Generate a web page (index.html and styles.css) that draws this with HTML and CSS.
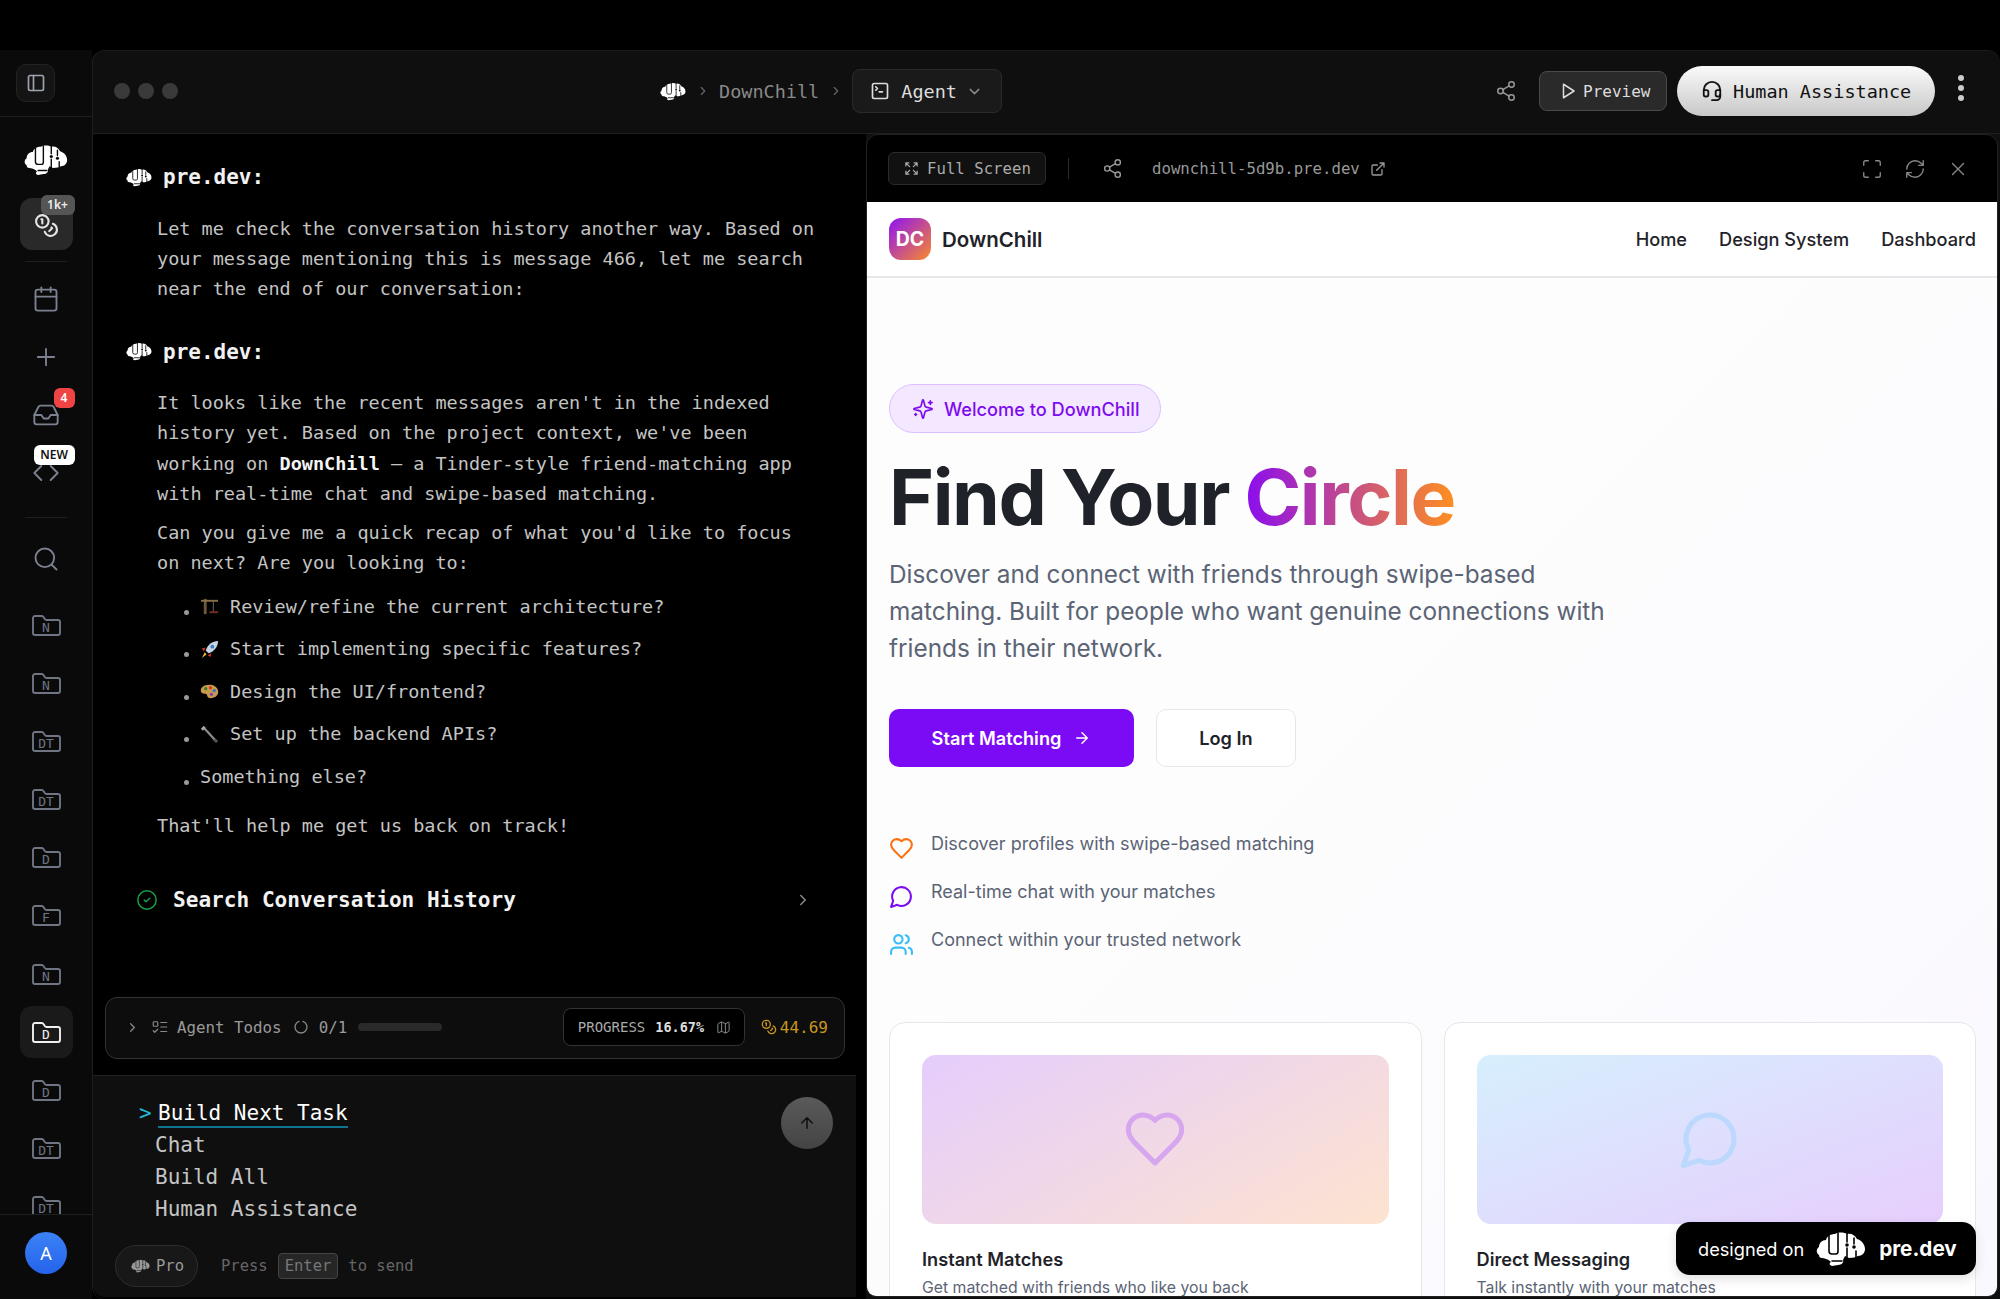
FILE: index.html
```html
<!DOCTYPE html>
<html lang="en">
<head>
    <meta charset="UTF-8">
    <title>DownChill - pre.dev</title>
    <link rel="stylesheet" href="styles.css">
</head>
<body>
    <!-- Icon sprite -->
    <svg class="sprite" xmlns="http://www.w3.org/2000/svg">
        <symbol id="brain" viewBox="0 0 50 36">
            <path class="brain-fill" d="M3 24C0 22 0 18 3 16C3 12 6 9 10 9C11 5 15 3 19 3C22 1 28 1 31 3C35 2 39 4 41 8C45 9 49 13 49 18C49 22 46 25 42 25C40 26 37 27 33 27L29 25L27 29C28 31 26 34 22 34L16 35C13 34 13 32 15 31C12 28 8 27 6 27C4 27 3 26 3 24Z"/>
            <path class="brain-cut" d="M13 4V20Q13 23 16 23H20Q22 23 22 20V2M31 2V11M31 17V28M38 7V13M40 20V26M16 30H26"/>
            <circle class="brain-dot" cx="31" cy="14" r="1.8"/>
            <circle class="brain-dot" cx="38" cy="16" r="1.8"/>
        </symbol>
        <symbol id="i-panel" viewBox="0 0 24 24"><rect x="3" y="3" width="18" height="18" rx="2"/><path d="M9 3v18"/></symbol>
        <symbol id="i-coins" viewBox="0 0 24 24"><circle cx="8" cy="8" r="6"/><path d="M18.09 10.37A6 6 0 1 1 10.34 18M7 6h1v4M16.71 13.88l.7.71-2.82 2.82"/></symbol>
        <symbol id="i-calendar" viewBox="0 0 24 24"><path d="M8 2v4M16 2v4M3 10h18"/><rect x="3" y="4" width="18" height="18" rx="2"/></symbol>
        <symbol id="i-plus" viewBox="0 0 24 24"><path d="M5 12h14M12 5v14"/></symbol>
        <symbol id="i-inbox" viewBox="0 0 24 24"><path d="M22 12h-6l-2 3h-4l-2-3H2"/><path d="M5.45 5.11 2 12v6a2 2 0 0 0 2 2h16a2 2 0 0 0 2-2v-6l-3.45-6.89A2 2 0 0 0 16.76 4H7.24a2 2 0 0 0-1.79 1.11z"/></symbol>
        <symbol id="i-code" viewBox="0 0 24 24"><path d="M16 18l6-6-6-6M8 6l-6 6 6 6"/></symbol>
        <symbol id="i-search" viewBox="0 0 24 24"><circle cx="11" cy="11" r="8"/><path d="m21 21-4.3-4.3"/></symbol>
        <symbol id="i-folder" viewBox="0 0 29 21"><path d="M3 20h23a2 2 0 0 0 2-2V7a2 2 0 0 0-2-2H14.5a2 2 0 0 1-1.7-.9L11.5 2A2 2 0 0 0 9.8 1H3a2 2 0 0 0-2 2v15a2 2 0 0 0 2 2z"/></symbol>
        <symbol id="i-right" viewBox="0 0 24 24"><path d="m9 18 6-6-6-6"/></symbol>
        <symbol id="i-down" viewBox="0 0 24 24"><path d="m6 9 6 6 6-6"/></symbol>
        <symbol id="i-terminal" viewBox="0 0 24 24"><path d="m7 11 2-2-2-2M11 13h4"/><rect x="3" y="3" width="18" height="18" rx="2"/></symbol>
        <symbol id="i-share" viewBox="0 0 24 24"><circle cx="18" cy="5" r="3"/><circle cx="6" cy="12" r="3"/><circle cx="18" cy="19" r="3"/><path d="M8.59 13.51l6.83 3.98M15.41 6.51l-6.82 3.98"/></symbol>
        <symbol id="i-play" viewBox="0 0 24 24"><path d="M6 3l14 9-14 9z"/></symbol>
        <symbol id="i-headset" viewBox="0 0 24 24"><path d="M3 11h3a2 2 0 0 1 2 2v3a2 2 0 0 1-2 2H5a2 2 0 0 1-2-2v-5Zm0 0a9 9 0 1 1 18 0m0 0v5a2 2 0 0 1-2 2h-1a2 2 0 0 1-2-2v-3a2 2 0 0 1 2-2h3Z"/><path d="M21 16v2a4 4 0 0 1-4 4h-5"/></symbol>
        <symbol id="i-expand" viewBox="0 0 24 24"><path d="m21 21-6-6m6 6v-4.8m0 4.8h-4.8M3 16.2V21m0 0h4.8M3 21l6-6M21 7.8V3m0 0h-4.8M21 3l-6 6M3 7.8V3m0 0h4.8M3 3l6 6"/></symbol>
        <symbol id="i-external" viewBox="0 0 24 24"><path d="M15 3h6v6M10 14 21 3M18 13v6a2 2 0 0 1-2 2H5a2 2 0 0 1-2-2V8a2 2 0 0 1 2-2h6"/></symbol>
        <symbol id="i-maximize" viewBox="0 0 24 24"><path d="M8 3H5a2 2 0 0 0-2 2v3M21 8V5a2 2 0 0 0-2-2h-3M3 16v3a2 2 0 0 0 2 2h3M16 21h3a2 2 0 0 0 2-2v-3"/></symbol>
        <symbol id="i-refresh" viewBox="0 0 24 24"><path d="M3 12a9 9 0 0 1 9-9 9.75 9.75 0 0 1 6.74 2.74L21 8M21 3v5h-5M21 12a9 9 0 0 1-9 9 9.75 9.75 0 0 1-6.74-2.74L3 16M8 16H3v5"/></symbol>
        <symbol id="i-close" viewBox="0 0 24 24"><path d="M18 6 6 18M6 6l12 12"/></symbol>
        <symbol id="i-check" viewBox="0 0 24 24"><circle cx="12" cy="12" r="10"/><path d="m9 12 2 2 4-4"/></symbol>
        <symbol id="i-todo" viewBox="0 0 24 24"><rect x="3" y="5" width="6" height="6" rx="1"/><path d="m3 17 2 2 4-4M13 6h8M13 12h8M13 18h8"/></symbol>
        <symbol id="i-spinner" viewBox="0 0 24 24"><path d="M15 3.5a9 9 0 1 1-6 0"/></symbol>
        <symbol id="i-map" viewBox="0 0 24 24"><path d="M14.106 5.553a2 2 0 0 0 1.788 0l3.659-1.83A1 1 0 0 1 21 4.619v12.764a1 1 0 0 1-.553.894l-4.553 2.277a2 2 0 0 1-1.788 0l-4.212-2.106a2 2 0 0 0-1.788 0l-3.659 1.83A1 1 0 0 1 3 19.381V6.618a1 1 0 0 1 .553-.894l4.553-2.277a2 2 0 0 1 1.788 0zM15 5.764v15M9 3.236v15"/></symbol>
        <symbol id="i-up" viewBox="0 0 24 24"><path d="m5 12 7-7 7 7M12 19V5"/></symbol>
        <symbol id="i-arrow" viewBox="0 0 24 24"><path d="M5 12h14M12 5l7 7-7 7"/></symbol>
        <symbol id="i-sparkles" viewBox="0 0 24 24"><path d="M9.937 15.5A2 2 0 0 0 8.5 14.063l-6.135-1.582a.5.5 0 0 1 0-.962L8.5 9.936A2 2 0 0 0 9.937 8.5l1.582-6.135a.5.5 0 0 1 .963 0L14.063 8.5A2 2 0 0 0 15.5 9.937l6.135 1.581a.5.5 0 0 1 0 .964L15.5 14.063a2 2 0 0 0-1.437 1.437l-1.582 6.135a.5.5 0 0 1-.963 0zM20 3v4M22 5h-4M4 17v2M5 18H3"/></symbol>
        <symbol id="i-heart" viewBox="0 0 24 24"><path d="M19 14c1.49-1.46 3-3.21 3-5.5A5.5 5.5 0 0 0 16.5 3c-1.76 0-3 .5-4.5 2-1.5-1.5-2.74-2-4.5-2A5.5 5.5 0 0 0 2 8.5c0 2.3 1.5 4.05 3 5.5l7 7Z"/></symbol>
        <symbol id="i-message" viewBox="0 0 24 24"><path d="M7.9 20A9 9 0 1 0 4 16.1L2 22Z"/></symbol>
        <symbol id="i-users" viewBox="0 0 24 24"><path d="M16 21v-2a4 4 0 0 0-4-4H6a4 4 0 0 0-4 4v2M22 21v-2a4 4 0 0 0-3-3.87M16 3.13a4 4 0 0 1 0 7.75"/><circle cx="9" cy="7" r="4"/></symbol>
        <symbol id="e-crane" viewBox="0 0 20 20"><path d="M4 2h3v16H4z" fill="#6f5a38"/><path d="M1 3h18v2H1z" fill="#8a7147"/><path d="M10 15h9v2h-9z" fill="#7a2e22"/><path d="M14 5v10" stroke="#6b6b6b" fill="none"/></symbol>
        <symbol id="e-rocket" viewBox="0 0 20 20"><path d="M19 1C13 1 8 5 6 11l3 3c6-2 10-7 10-13z" fill="#c9d4e6"/><circle cx="13" cy="7" r="2" fill="#3b82c4"/><path d="M6 8L2 9l2 3zM12 14l-1 4-3-2z" fill="#d8342c"/><path d="M5 13l2 2-5 4z" fill="#f8b81f"/></symbol>
        <symbol id="e-palette" viewBox="0 0 20 20"><path d="M10 3C4 3 0 6 1 10c1 3 5 2 6 3s0 4 4 4c5 0 9-3 8-8-1-4-5-6-9-6z" fill="#c99a4a"/><circle cx="6" cy="7" r="1.7" fill="#2e7d32"/><circle cx="11" cy="6" r="1.7" fill="#d8342c"/><circle cx="15" cy="9" r="1.7" fill="#2f6fd0"/><circle cx="12" cy="13" r="1.7" fill="#7b3fb3"/></symbol>
        <symbol id="e-wrench" viewBox="0 0 20 20"><path d="M3 2l3 3M5 4l12 13" stroke="#8b8b8b" stroke-width="2.4" fill="none"/><path d="M1 4l3-3 2 2-3 3z" fill="#a8a8a8"/><path d="M15 15l3 3" stroke="#555" stroke-width="3" fill="none"/></symbol>
    </svg>

    <div class="app">
        <!-- Left rail -->
        <aside class="sidebar">
            <div class="side-head">
                <button class="toggle"><svg class="icon ic-20"><use href="#i-panel"/></svg></button>
            </div>
            <nav class="side-nav">
                <svg class="logo"><use href="#brain"/></svg>
                <div class="rail-item rail-active">
                    <svg class="icon ic-coins"><use href="#i-coins"/></svg>
                    <span class="rail-badge badge-gray">1k+</span>
                </div>
                <hr class="rail-rule">
                <div class="rail-item"><svg class="icon ic-26"><use href="#i-calendar"/></svg></div>
                <div class="rail-item"><svg class="icon ic-26"><use href="#i-plus"/></svg></div>
                <div class="rail-item">
                    <svg class="icon ic-26"><use href="#i-inbox"/></svg>
                    <span class="rail-badge badge-red">4</span>
                </div>
                <div class="rail-item">
                    <svg class="icon ic-26"><use href="#i-code"/></svg>
                    <span class="rail-badge badge-new">NEW</span>
                </div>
                <hr class="rail-rule rule-low">
                <div class="rail-item"><svg class="icon ic-26"><use href="#i-search"/></svg></div>
                <div class="folders">
                    <div class="rail-item folder"><svg class="icon ic-folder"><use href="#i-folder"/></svg><span>N</span></div>
                    <div class="rail-item folder"><svg class="icon ic-folder"><use href="#i-folder"/></svg><span>N</span></div>
                    <div class="rail-item folder"><svg class="icon ic-folder"><use href="#i-folder"/></svg><span>DT</span></div>
                    <div class="rail-item folder"><svg class="icon ic-folder"><use href="#i-folder"/></svg><span>DT</span></div>
                    <div class="rail-item folder"><svg class="icon ic-folder"><use href="#i-folder"/></svg><span>D</span></div>
                    <div class="rail-item folder"><svg class="icon ic-folder"><use href="#i-folder"/></svg><span>F</span></div>
                    <div class="rail-item folder"><svg class="icon ic-folder"><use href="#i-folder"/></svg><span>N</span></div>
                    <div class="rail-item folder folder-on"><svg class="icon ic-folder"><use href="#i-folder"/></svg><span>D</span></div>
                    <div class="rail-item folder"><svg class="icon ic-folder"><use href="#i-folder"/></svg><span>D</span></div>
                    <div class="rail-item folder"><svg class="icon ic-folder"><use href="#i-folder"/></svg><span>DT</span></div>
                    <div class="rail-item folder"><svg class="icon ic-folder"><use href="#i-folder"/></svg><span>DT</span></div>
                </div>
            </nav>
            <div class="side-foot"><div class="avatar">A</div></div>
        </aside>

        <main class="main">
            <header class="topbar">
                <div class="dots"><span></span><span></span><span></span></div>
                <div class="crumbs">
                    <svg class="crumb-logo"><use href="#brain"/></svg>
                    <svg class="icon crumb-sep"><use href="#i-right"/></svg>
                    <span class="crumb-name">DownChill</span>
                    <svg class="icon crumb-sep"><use href="#i-right"/></svg>
                    <button class="agent-btn">
                        <svg class="icon ic-20"><use href="#i-terminal"/></svg>
                        <span>Agent</span>
                        <svg class="icon agent-caret"><use href="#i-down"/></svg>
                    </button>
                </div>
                <div class="top-actions">
                    <svg class="icon share-top"><use href="#i-share"/></svg>
                    <button class="preview-btn"><svg class="icon ic-18"><use href="#i-play"/></svg>Preview</button>
                    <button class="human-btn"><svg class="icon ic-22"><use href="#i-headset"/></svg>Human Assistance</button>
                    <div class="kebab"><span></span><span></span><span></span></div>
                </div>
            </header>

            <div class="workspace">
                <section class="chat">
                    <div class="messages">
                        <h3 class="who"><svg class="who-logo"><use href="#brain"/></svg>pre.dev:</h3>
                        <div class="msg msg-first">
                            <p>Let me check the conversation history another way. Based on your message mentioning this is message 466, let me search near the end of our conversation:</p>
                        </div>
                        <h3 class="who who-next"><svg class="who-logo"><use href="#brain"/></svg>pre.dev:</h3>
                        <div class="msg">
                            <p>It looks like the recent messages aren't in the indexed history yet. Based on the project context, we've been working on <strong>DownChill</strong> – a Tinder-style friend-matching app with real&#8209;time chat and swipe-based matching.</p>
                            <p class="p-tight">Can you give me a quick recap of what you'd like to focus on next? Are you looking to:</p>
                            <ul class="choices">
                                <li><svg class="emoji"><use href="#e-crane"/></svg>Review/refine the current architecture?</li>
                                <li><svg class="emoji"><use href="#e-rocket"/></svg>Start implementing specific features?</li>
                                <li><svg class="emoji"><use href="#e-palette"/></svg>Design the UI/frontend?</li>
                                <li><svg class="emoji"><use href="#e-wrench"/></svg>Set up the backend APIs?</li>
                                <li>Something else?</li>
                            </ul>
                            <p class="p-end">That'll help me get us back on track!</p>
                        </div>
                        <div class="tool-row">
                            <svg class="icon tool-check"><use href="#i-check"/></svg>
                            <span class="tool-name">Search Conversation History</span>
                            <svg class="icon tool-caret"><use href="#i-right"/></svg>
                        </div>
                    </div>

                    <div class="todos">
                        <svg class="icon todo-caret"><use href="#i-right"/></svg>
                        <svg class="icon todo-list"><use href="#i-todo"/></svg>
                        <span>Agent Todos</span>
                        <svg class="icon todo-spin"><use href="#i-spinner"/></svg>
                        <span>0/1</span>
                        <div class="todo-bar"></div>
                        <div class="progress-box">
                            <span class="progress-label">PROGRESS</span>
                            <strong class="progress-num">16.67%</strong>
                            <svg class="icon todo-map"><use href="#i-map"/></svg>
                        </div>
                        <div class="credits"><svg class="icon credit-icon"><use href="#i-coins"/></svg>44.69</div>
                    </div>

                    <div class="composer">
                        <div class="composer-top">
                            <div class="options">
                                <div class="opt opt-on"><span class="caret">&gt;</span><span class="opt-label">Build Next Task</span></div>
                                <div class="opt">Chat</div>
                                <div class="opt">Build All</div>
                                <div class="opt">Human Assistance</div>
                            </div>
                            <button class="send"><svg class="icon ic-18"><use href="#i-up"/></svg></button>
                        </div>
                        <div class="composer-foot">
                            <div class="pro-pill"><svg class="pro-logo"><use href="#brain"/></svg>Pro</div>
                            <span>Press</span><kbd>Enter</kbd><span>to send</span>
                        </div>
                    </div>
                </section>

                <section class="panel">
                    <div class="panel-bar">
                        <button class="full-btn"><svg class="icon ic-15"><use href="#i-expand"/></svg>Full Screen</button>
                        <span class="bar-rule"></span>
                        <svg class="icon bar-share"><use href="#i-share"/></svg>
                        <span class="url">downchill-5d9b.pre.dev</span>
                        <svg class="icon ic-16 url-ext"><use href="#i-external"/></svg>
                        <div class="bar-tools">
                            <svg class="icon ic-22 thin"><use href="#i-maximize"/></svg>
                            <svg class="icon ic-22 thin"><use href="#i-refresh"/></svg>
                            <svg class="icon ic-22 thin"><use href="#i-close"/></svg>
                        </div>
                    </div>

                    <div class="site">
                        <div class="site-nav">
                            <div class="brand"><span class="brand-mark">DC</span><span class="brand-name">DownChill</span></div>
                            <div class="nav-links"><a>Home</a><a>Design System</a><a>Dashboard</a></div>
                        </div>
                        <div class="hero">
                            <div class="pill"><svg class="icon pill-icon"><use href="#i-sparkles"/></svg>Welcome to DownChill</div>
                            <h1>Find Your <span class="grad">Circle</span></h1>
                            <p class="lead">Discover and connect with friends through swipe-based matching. Built for people who want genuine connections with friends in their network.</p>
                            <div class="cta">
                                <button class="btn-main">Start Matching<svg class="icon ic-18"><use href="#i-arrow"/></svg></button>
                                <button class="btn-ghost">Log In</button>
                            </div>
                            <ul class="features">
                                <li><svg class="icon feat-icon c-orange"><use href="#i-heart"/></svg>Discover profiles with swipe-based matching</li>
                                <li><svg class="icon feat-icon c-purple"><use href="#i-message"/></svg>Real-time chat with your matches</li>
                                <li><svg class="icon feat-icon c-sky"><use href="#i-users"/></svg>Connect within your trusted network</li>
                            </ul>
                            <div class="cards">
                                <article class="card">
                                    <div class="card-art art-warm"><svg class="icon art-icon"><use href="#i-heart"/></svg></div>
                                    <h4>Instant Matches</h4>
                                    <p>Get matched with friends who like you back</p>
                                </article>
                                <article class="card">
                                    <div class="card-art art-cool"><svg class="icon art-icon art-blue"><use href="#i-message"/></svg></div>
                                    <h4>Direct Messaging</h4>
                                    <p>Talk instantly with your matches</p>
                                </article>
                            </div>
                        </div>
                        <div class="made-on">
                            <span>designed on</span>
                            <svg class="made-logo"><use href="#brain"/></svg>
                            <strong>pre.dev</strong>
                        </div>
                    </div>
                </section>
            </div>
        </main>
    </div>
</body>
</html>
```
FILE: styles.css
```css
* {
    box-sizing: border-box;
}

body {
    margin: 0;
    width: 2000px;
    height: 1299px;
    overflow: hidden;
    background-color: #000;
    color: #ccc;
    font-family: "DejaVu Sans Mono", monospace;
}

button {
    font-family: inherit;
    cursor: pointer;
}

.sprite {
    width: 0;
    height: 0;
    position: absolute;
}

.icon {
    fill: none;
    stroke: currentColor;
    stroke-width: 2;
    stroke-linecap: round;
    stroke-linejoin: round;
    flex-shrink: 0;
}

.ic-15 { width: 15px; height: 15px; }
.ic-16 { width: 16px; height: 16px; }
.ic-18 { width: 18px; height: 18px; }
.ic-20 { width: 20px; height: 20px; }
.ic-22 { width: 22px; height: 22px; }
.ic-26 { width: 28px; height: 28px; stroke-width: 1.6; }
.thin { stroke-width: 1.5; }

/* brain logo, the cut colour follows the backdrop */
.brain-fill { fill: var(--brain, #fff); }
.brain-cut { fill: none; stroke: var(--cut, #000); stroke-width: 1.6; stroke-linecap: round; }
.brain-dot { fill: var(--cut, #000); }

.app {
    display: flex;
    height: 1299px;
    padding-top: 50px;
}

/* Left rail */
.sidebar {
    width: 92px;
    display: flex;
    flex-direction: column;
    background-color: #0a0a0a;
    color: #6b7280;
}

.side-head {
    height: 67px;
    flex-shrink: 0;
    display: flex;
    align-items: center;
    padding-left: 16px;
    border-bottom: 1px solid #1f1f1f;
}

.toggle {
    width: 39px;
    height: 38px;
    padding: 0;
    display: flex;
    align-items: center;
    justify-content: center;
    background-color: #141414;
    border: 1px solid #232323;
    border-radius: 10px;
    color: #9ca3af;
}

.side-nav {
    flex: 1;
    min-height: 0;
    overflow: hidden;
    display: flex;
    flex-direction: column;
    align-items: center;
}

.logo {
    width: 44px;
    height: 32px;
    flex-shrink: 0;
    margin-top: 27px;
    margin-bottom: 22px;
    --cut: #0a0a0a;
}

.rail-item {
    position: relative;
    width: 53px;
    height: 52px;
    flex-shrink: 0;
    display: flex;
    align-items: center;
    justify-content: center;
    border-radius: 12px;
    margin-bottom: 6px;
    color: #7b8190;
}

.rail-active {
    background-color: #292929;
    color: #e5e5e5;
    margin-bottom: 0;
}

.ic-coins {
    width: 25px;
    height: 25px;
    margin-top: 2px;
}

.rail-rule {
    width: 42px;
    flex-shrink: 0;
    margin: 11px 0 11px;
    border: none;
    border-top: 1px solid #1f1f1f;
}

.rule-low {
    margin: 12px 0 15px;
}

.rail-badge {
    position: absolute;
    border-radius: 6px;
    font-family: "Noto Sans", sans-serif;
    font-size: 12px;
    font-weight: 600;
    line-height: 20px;
    text-align: center;
}

.badge-gray {
    top: -3px;
    right: -2px;
    width: 34px;
    background-color: #555;
    color: #eee;
}

.badge-red {
    top: -1px;
    right: -2px;
    width: 21px;
    background-color: #ef4444;
    color: #fff;
}

.badge-new {
    top: -2px;
    right: -2px;
    width: 41px;
    background-color: #fff;
    color: #111;
}

.folders {
    display: flex;
    flex-direction: column;
    flex-shrink: 0;
    margin-top: 8px;
}

.folder {
    display: grid;
    place-items: center;
    margin-bottom: 6.2px;
    color: #6f7583;
}

.folder > * {
    grid-area: 1 / 1;
}

.ic-folder {
    width: 29px;
    height: 21px;
    stroke-width: 1.9;
}

.folder span {
    font-size: 13px;
    margin-top: 4px;
}

.folder-on {
    background-color: #1a1a1a;
    color: #f0f0f0;
}

.side-foot {
    height: 85px;
    flex-shrink: 0;
    display: flex;
    justify-content: center;
    padding-top: 17px;
    border-top: 1px solid #1f1f1f;
}

.avatar {
    width: 42px;
    height: 42px;
    border-radius: 50%;
    background: linear-gradient(180deg, #3b82f6, #2563eb);
    color: #fff;
    font-family: "Noto Sans", sans-serif;
    font-size: 18px;
    line-height: 42px;
    text-align: center;
}

/* Main window */
.main {
    flex: 1;
    min-width: 0;
    display: flex;
    flex-direction: column;
    background-color: #0f0f0f;
    border-top: 1px solid #1a1a1a;
    border-left: 1px solid #1f1f1f;
    border-radius: 12px 12px 0 12px;
}

.topbar {
    height: 83px;
    flex-shrink: 0;
    display: flex;
    align-items: center;
    padding: 0 0 2px 21px;
    border-bottom: 1px solid #1f1f1f;
}

.dots {
    display: flex;
    gap: 8px;
}

.dots span {
    width: 16px;
    height: 16px;
    border-radius: 50%;
    background-color: #3a3a3a;
}

.crumbs {
    display: flex;
    align-items: center;
    margin-left: 482px;
    color: #8a8a8a;
    font-size: 18.5px;
}

.crumb-logo {
    width: 26px;
    height: 19px;
    --cut: #0f0f0f;
}

.crumb-sep {
    width: 14px;
    height: 14px;
    margin: 0 8px 0 10px;
    color: #666;
}

.crumb-name {
    margin-left: 1px;
}

.agent-btn {
    width: 150px;
    height: 44px;
    margin-left: 1px;
    display: flex;
    align-items: center;
    gap: 11px;
    padding: 0 0 0 17px;
    background-color: #1a1a1a;
    border: 1px solid #2a2a2a;
    border-radius: 8px;
    color: #ddd;
    font-size: 18.5px;
}

.agent-caret {
    width: 17px;
    height: 17px;
    margin-left: -2px;
    color: #888;
}

.top-actions {
    margin-left: auto;
    display: flex;
    align-items: center;
}

.share-top {
    width: 22px;
    height: 22px;
    stroke-width: 1.6;
    color: #999;
    margin-right: 22px;
}

.preview-btn {
    width: 128px;
    height: 40px;
    display: flex;
    align-items: center;
    gap: 6px;
    padding: 0 0 0 19px;
    background-color: #2a2a2a;
    border: 1px solid #4a4a4a;
    border-radius: 8px;
    color: #ddd;
    font-size: 16px;
}

.human-btn {
    width: 258px;
    height: 50px;
    margin-left: 10px;
    display: flex;
    align-items: center;
    gap: 10px;
    padding: 0 0 0 24px;
    border: none;
    border-radius: 25px;
    background: linear-gradient(180deg, #fafafa, #c8c8c8);
    color: #111;
    font-size: 18.5px;
}

.kebab {
    display: flex;
    flex-direction: column;
    gap: 4px;
    margin: 0 36px 6px 23px;
}

.kebab span {
    width: 6px;
    height: 6px;
    border-radius: 50%;
    background-color: #ccc;
}

.workspace {
    flex: 1;
    min-height: 0;
    display: flex;
}

/* Chat column */
.chat {
    width: 773px;
    flex-shrink: 0;
    display: flex;
    flex-direction: column;
    padding-bottom: 2px;
    background-color: #000;
    border-radius: 0 0 0 12px;
}

.messages {
    flex: 1;
    min-height: 0;
    padding-top: 28px;
    font-size: 18.5px;
    line-height: 30.2px;
}

.who {
    margin: 0;
    height: 30px;
    display: flex;
    align-items: center;
    gap: 11px;
    padding-left: 33px;
    color: #f2f2f2;
    font-size: 21px;
    font-weight: bold;
}

.who-next {
    margin-top: 32.5px;
}

.who-logo {
    width: 26px;
    height: 19px;
}

.msg {
    width: 660px;
    margin: 21.5px 0 0 64px;
    color: #c4c4c4;
}

.msg p {
    margin: 0;
}

.msg strong {
    color: #f5f5f5;
}

.msg .p-tight {
    margin-top: 9px;
}

.choices {
    list-style: none;
    margin: 13.5px 0 0;
    padding: 0;
}

.choices li {
    position: relative;
    display: flex;
    align-items: center;
    margin: 0 0 12.3px 43px;
}

.choices li::before {
    content: "";
    position: absolute;
    left: -16px;
    top: 18px;
    width: 5px;
    height: 5px;
    border-radius: 50%;
    background-color: #999;
}

.emoji {
    width: 19px;
    height: 19px;
    margin-right: 11px;
    flex-shrink: 0;
}

.msg .p-end {
    margin-top: 19px;
}

.tool-row {
    height: 30px;
    margin-top: 43.5px;
    display: flex;
    align-items: center;
    padding-left: 43px;
}

.tool-check {
    width: 22px;
    height: 22px;
    stroke-width: 1.6;
    color: #16a34a;
}

.tool-name {
    margin-left: 15px;
    font-size: 21.1px;
    font-weight: bold;
    color: #f2f2f2;
}

.tool-caret {
    width: 18px;
    height: 18px;
    margin-left: auto;
    margin-right: 54px;
    color: #888;
}

.todos {
    flex-shrink: 0;
    width: 740px;
    height: 62px;
    margin: 0 0 16px 12px;
    display: flex;
    align-items: center;
    padding: 0 16px 2px 19px;
    background-color: #0d0d0d;
    border: 1px solid #333;
    border-radius: 12px;
    color: #9a9a9a;
    font-size: 15.8px;
}

.todo-caret {
    width: 15px;
    height: 15px;
    margin-right: 11px;
    color: #888;
}

.todo-list {
    width: 18px;
    height: 18px;
    margin-right: 8px;
    stroke-width: 1.6;
    color: #888;
}

.todo-spin {
    width: 16px;
    height: 16px;
    margin: 0 10px 0 11px;
    color: #888;
}

.todo-bar {
    width: 84px;
    height: 8px;
    margin-left: 11px;
    background-color: #2a2a2a;
    border-radius: 4px;
}

.progress-box {
    width: 182px;
    height: 38px;
    margin-left: auto;
    display: flex;
    align-items: center;
    padding-left: 14px;
    background-color: #000;
    border: 1px solid #333;
    border-radius: 8px;
}

.progress-label {
    font-size: 14px;
    color: #aaa;
}

.progress-num {
    margin-left: 10px;
    font-size: 13.5px;
    color: #ddd;
}

.todo-map {
    width: 15px;
    height: 15px;
    margin-left: 12px;
    stroke-width: 1.6;
    color: #888;
}

.credits {
    display: flex;
    align-items: center;
    gap: 3px;
    margin-left: 16px;
    color: #c8951f;
    font-size: 16px;
}

.credit-icon {
    width: 16px;
    height: 16px;
}

/* Composer */
.composer {
    flex-shrink: 0;
    width: 763px;
    height: 222px;
    padding: 21px 23px 0 0;
    background-color: #0f0f0f;
    border-top: 1px solid #222;
    border-radius: 0 0 0 12px;
}

.composer-top {
    display: flex;
    justify-content: space-between;
    align-items: flex-start;
}

.options {
    padding-left: 62px;
    font-size: 21px;
    line-height: 32px;
    color: #c4c4c4;
}

.opt-on {
    position: relative;
    width: max-content;
    padding-left: 3px;
    color: #fff;
}

.caret {
    position: absolute;
    left: -16px;
    top: -3px;
    font-size: 21px;
    color: #22b8d8;
}

.opt-label {
    display: block;
    height: 28px;
    margin: 3px 0 1px;
    line-height: 26px;
    border-bottom: 2px solid #0e7490;
}

.send {
    width: 52px;
    height: 52px;
    padding: 0;
    display: flex;
    align-items: center;
    justify-content: center;
    border: none;
    border-radius: 50%;
    background: linear-gradient(180deg, #5a5a5a, #444);
    color: #0f0f0f;
}

.composer-foot {
    margin: 20px 0 0 22px;
    display: flex;
    align-items: center;
    gap: 10px;
    color: #666;
    font-size: 15.5px;
}

.pro-pill {
    width: 83px;
    height: 42px;
    margin-right: 13px;
    display: flex;
    align-items: center;
    gap: 6px;
    padding-left: 15px;
    background-color: #181818;
    border: 1px solid #2c2c2c;
    border-radius: 21px;
    color: #999;
    --brain: #999;
    --cut: #181818;
}

.pro-logo {
    width: 19px;
    height: 14px;
}

kbd {
    height: 26px;
    padding: 0 6px;
    font-family: inherit;
    font-size: 15.5px;
    line-height: 24px;
    background-color: #262626;
    border: 1px solid #444;
    border-radius: 4px;
    color: #777;
}

/* Preview panel */
.panel {
    flex: 1;
    min-width: 0;
    display: flex;
    flex-direction: column;
    margin: 0 2px 2px 0;
    background-color: #000;
    border: 1px solid #222;
    border-radius: 12px 12px 10px 10px;
    overflow: hidden;
}

.panel-bar {
    height: 67px;
    flex-shrink: 0;
    display: flex;
    align-items: center;
    padding: 0 28px 0 21px;
    color: #999;
    font-size: 15.7px;
}

.full-btn {
    width: 158px;
    height: 33px;
    display: flex;
    align-items: center;
    gap: 8px;
    padding: 0 0 0 15px;
    background-color: #111;
    border: 1px solid #2a2a2a;
    border-radius: 6px;
    color: #aaa;
    font-size: 15.7px;
}

.bar-rule {
    width: 1px;
    height: 21px;
    margin: 0 33px 0 22px;
    background-color: #2a2a2a;
}

.bar-share {
    width: 21px;
    height: 21px;
    stroke-width: 1.6;
    margin-right: 29px;
}

.url-ext {
    margin-left: 10px;
}

.bar-tools {
    margin-left: auto;
    display: flex;
    gap: 21px;
    color: #888;
}

/* Embedded site */
.site {
    position: relative;
    flex: 1;
    min-height: 0;
    overflow: hidden;
    background: linear-gradient(135deg, #fdfdfd 40%, #faf8ff);
    color: #1f2329;
    font-family: Inter, sans-serif;
}

.site-nav {
    height: 76px;
    display: flex;
    align-items: center;
    justify-content: space-between;
    padding: 0 21px 0 22px;
    background-color: #fff;
    border-bottom: 2px solid #e6e7eb;
}

.brand {
    display: flex;
    align-items: center;
    gap: 11px;
}

.brand-mark {
    width: 42px;
    height: 42px;
    border-radius: 12px;
    background: linear-gradient(135deg, #8f12f5, #f98a2c);
    color: #fff;
    font-size: 19.5px;
    font-weight: 700;
    line-height: 42px;
    text-align: center;
}

.brand-name {
    font-size: 20.5px;
    font-weight: 600;
}

.nav-links {
    display: flex;
    gap: 32px;
    font-size: 18.2px;
    font-weight: 500;
}

.hero {
    padding: 106px 21px 0 22px;
}

.pill {
    width: 272px;
    height: 49px;
    display: flex;
    align-items: center;
    gap: 10px;
    padding-left: 22px;
    background-color: #f3e8ff;
    border: 1px solid #dcbfff;
    border-radius: 25px;
    color: #7e0bf0;
    font-size: 18.2px;
    font-weight: 500;
}

.pill-icon {
    width: 22px;
    height: 22px;
    stroke-width: 1.8;
}

h1 {
    margin: 21px 0 0;
    font-size: 76.8px;
    font-weight: 700;
    line-height: 88px;
    letter-spacing: -1.4px;
    word-spacing: -1.5px;
}

.grad {
    background: linear-gradient(90deg, #8a0cf0, #ff8f1f);
    -webkit-background-clip: text;
    background-clip: text;
    color: transparent;
}

.lead {
    width: 740px;
    margin: 14px 0 0;
    color: #5b6475;
    font-size: 24.35px;
    line-height: 37px;
}

.cta {
    display: flex;
    gap: 22px;
    margin-top: 42px;
}

.cta button {
    height: 58px;
    border-radius: 10px;
    font-family: Inter, sans-serif;
    font-size: 18.2px;
    font-weight: 600;
}

.btn-main {
    width: 245px;
    display: flex;
    align-items: center;
    justify-content: center;
    gap: 12px;
    background-color: #7c0bf5;
    border: none;
    color: #fff;
}

.btn-ghost {
    width: 140px;
    background-color: #fff;
    border: 1px solid #e5e7eb;
    color: #1f2329;
}

.features {
    list-style: none;
    margin: 62px 0 0;
    padding: 0;
    color: #5b6475;
    font-size: 18px;
    line-height: 30px;
}

.features li {
    display: flex;
    gap: 17px;
    height: 30px;
    margin-bottom: 17.9px;
}

.feat-icon {
    width: 25px;
    height: 25px;
    margin-top: 7px;
    stroke-width: 2;
}

.c-orange { color: #f97316; }
.c-purple { color: #7c0bf5; }
.c-sky { color: #38bdf8; }

.cards {
    display: grid;
    grid-template-columns: 1fr 1fr;
    gap: 22px;
    margin-top: 67px;
}

.card {
    height: 320px;
    padding: 32px;
    background-color: #fff;
    border: 1px solid #e5e7eb;
    border-radius: 16px;
}

.card-art {
    height: 169px;
    display: flex;
    align-items: center;
    justify-content: center;
    border-radius: 14px;
}

.art-warm {
    background: linear-gradient(150deg, #e5cdfd, #fde3cf);
}

.art-cool {
    background: linear-gradient(160deg, #d6effd, #e7cefd);
}

.art-icon {
    width: 64px;
    height: 64px;
    stroke-width: 1.9;
    color: #d6a6ee;
}

.art-blue {
    color: #bcd8fd;
}

.card h4 {
    margin: 20px 0 0;
    font-size: 18.2px;
    font-weight: 600;
    line-height: 30px;
}

.card p {
    margin: 1px 0 0;
    color: #5b6475;
    font-size: 15.8px;
    line-height: 26px;
}

.made-on {
    position: absolute;
    right: 21px;
    bottom: 21px;
    width: 300px;
    height: 53px;
    display: flex;
    align-items: center;
    padding-left: 22px;
    background-color: #000;
    border-radius: 14px;
    box-shadow: 0 4px 12px rgba(0, 0, 0, 0.12);
    color: #fff;
    font-size: 18.2px;
}

.made-logo {
    width: 50px;
    height: 36px;
    margin: 0 13px 0 12px;
}

.made-on strong {
    font-size: 20.7px;
    font-weight: 700;
}
```
